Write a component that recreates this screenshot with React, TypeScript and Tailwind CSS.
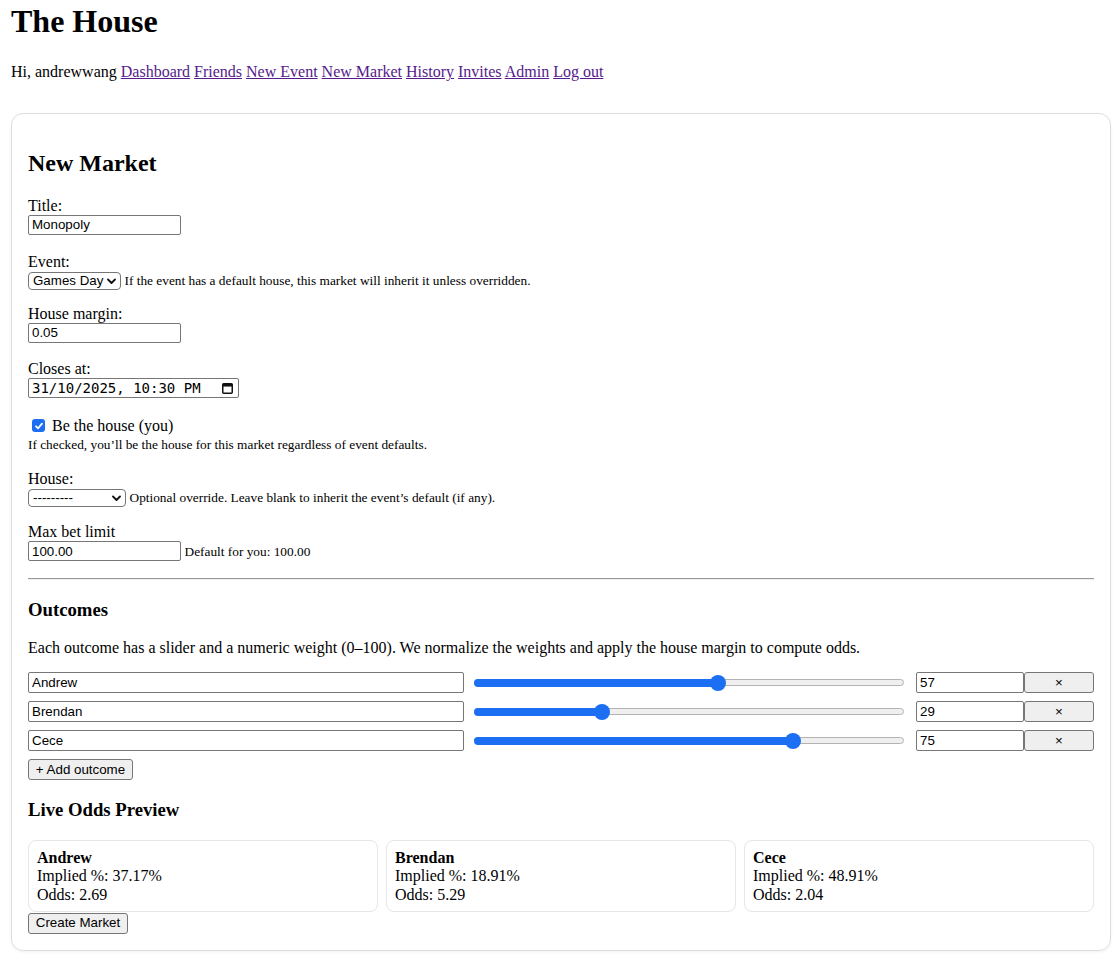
import React from "react";

const sans = "font-['Liberation_Sans',Arial,sans-serif] text-[13.33px] text-black";

function TextBox({ value, w, h = 20 }: { value: string; w: string; h?: number }) {
  return (
    <div
      className={`${sans} ${w} flex items-center border border-[#767676] rounded-[2px] bg-white pl-[3px] leading-none`}
      style={{ height: h }}
    >
      {value}
    </div>
  );
}

function FakeSelect({ value, w }: { value: string; w: string }) {
  return (
    <div
      className={`${sans} ${w} relative h-[18px] flex items-center border border-[#767676] rounded-[4px] bg-white pl-[4px] leading-none`}
    >
      <span>{value}</span>
      <svg
        className="absolute right-[4px] top-[5px]"
        width="9"
        height="7"
        viewBox="0 0 9 7"
        fill="none"
      >
        <path d="M1 1.5 L4.5 5 L8 1.5" stroke="#111" strokeWidth="1.8" strokeLinecap="round" strokeLinejoin="round" />
      </svg>
    </div>
  );
}

function Btn({ children, w, h = 21 }: { children: React.ReactNode; w: string; h?: number }) {
  return (
    <div
      className={`${sans} ${w} flex items-center justify-center border border-[#767676] rounded-[3px] bg-[#efefef] leading-none`}
      style={{ height: h }}
    >
      {children}
    </div>
  );
}

function Slider({ value }: { value: number }) {
  const c = 8 + (value / 100) * 414;
  return (
    <div className="relative w-[430px] h-[21px] ml-[10px] shrink-0">
      <div className="absolute left-0 right-0 top-[7px] h-[7px] rounded-full bg-[#efefef] border border-[#b3b3b3]" />
      <div className="absolute left-0 top-[6.5px] h-[8px] rounded-full bg-[#1c6ef2]" style={{ width: c }} />
      <div className="absolute top-[2.5px] w-[16px] h-[16px] rounded-full bg-[#1c6ef2]" style={{ left: c - 8 }} />
    </div>
  );
}

function OutcomeRow({ name, value }: { name: string; value: number }) {
  return (
    <div className="flex items-center h-[21px]">
      <TextBox value={name} w="w-[436px]" h={21} />
      <Slider value={value} />
      <div className="ml-[12px]">
        <TextBox value={String(value)} w="w-[108px]" h={21} />
      </div>
      <Btn w="w-[70px]">×</Btn>
    </div>
  );
}

function OddsCard({ name, implied, odds }: { name: string; implied: string; odds: string }) {
  return (
    <div className="border border-[#e6e6e6] rounded-[8px] px-[8px] pt-[7.5px] pb-[6.5px] leading-[18.4px]">
      <div className="font-bold">{name}</div>
      <div>Implied %: {implied}</div>
      <div>Odds: {odds}</div>
    </div>
  );
}

const links = ["Dashboard", "Friends", "New Event", "New Market", "History", "Invites", "Admin", "Log out"];

export default function App() {
  return (
    <div className="min-h-[955px] bg-white text-black font-['Liberation_Serif','Times_New_Roman',serif] text-[16px] pl-[10px]">
      <h1 className="pt-[3px] text-[32px] font-bold leading-[36.8px] pl-[1px]">The House</h1>
      <div className="mt-[23.4px] leading-[18.4px] pl-[1px]">
        Hi, andrewwang{" "}
        {links.map((l, i) => (
          <React.Fragment key={l}>
            <a href="#" className="text-[#551a8b] underline">
              {l}
            </a>
            {i < links.length - 1 ? " " : ""}
          </React.Fragment>
        ))}
      </div>

      <div className="mt-[31px] ml-[1px] w-[1100px] border border-[#dedede] rounded-[12px] shadow-[0_1px_3px_rgba(0,0,0,0.06)] p-[16px]">
        <h2 className="mt-[20px] text-[24px] font-bold leading-[27.6px]">New Market</h2>

        <div className="flex flex-col">
          {/* Title */}
          <div className="mt-[19.5px] leading-[18.4px]">Title:</div>
          <TextBox value="Monopoly" w="w-[153px]" />

          {/* Event */}
          <div className="mt-[18px] leading-[18.4px]">Event:</div>
          <div className="flex items-center h-[18px]">
            <FakeSelect value="Games Day" w="w-[93px]" />
            <span className="ml-[3.5px] text-[13.33px] leading-[15px]">
              If the event has a default house, this market will inherit it unless overridden.
            </span>
          </div>

          {/* House margin */}
          <div className="mt-[15px] leading-[18.4px]">House margin:</div>
          <TextBox value="0.05" w="w-[153px]" />

          {/* Closes at */}
          <div className="mt-[17px] leading-[18.4px]">Closes at:</div>
          <div className="relative w-[211px] h-[20px] border border-[#767676] rounded-[2px] bg-white flex items-center pl-[3px] font-['DejaVu_Sans_Mono',monospace] text-[14px] leading-none">
            <span className="whitespace-pre">31/10/2025, 10:30 PM</span>
            <svg className="absolute right-[5px] top-[4px]" width="11" height="11" viewBox="0 0 11 11" fill="none">
              <rect x="0.75" y="0.75" width="9.5" height="9.5" rx="1" stroke="#111" strokeWidth="1.5" />
              <rect x="0.75" y="0.75" width="9.5" height="2.8" fill="#111" />
            </svg>
          </div>

          {/* Be the house */}
          <div className="mt-[16px] h-[23px] flex items-center">
            <div className="ml-[4px] w-[13px] h-[13px] rounded-[3px] bg-[#1c6ef2] flex items-center justify-center">
              <svg width="10" height="10" viewBox="0 0 10 10" fill="none">
                <path d="M2 5.3 L4.1 7.3 L8 2.6" stroke="white" strokeWidth="1.8" strokeLinecap="round" strokeLinejoin="round" />
              </svg>
            </div>
            <span className="ml-[7px] leading-[18.4px]">Be the house (you)</span>
          </div>
          <div className="text-[13.33px] leading-[15.3px]">
            If checked, you’ll be the house for this market regardless of event defaults.
          </div>

          {/* House */}
          <div className="mt-[17px] leading-[18.4px]">House:</div>
          <div className="flex items-center h-[19px]">
            <FakeSelect value="---------" w="w-[98px]" />
            <span className="ml-[3.5px] text-[13.33px] leading-[15px]">
              Optional override. Leave blank to inherit the event’s default (if any).
            </span>
          </div>

          {/* Max bet */}
          <div className="mt-[16px] leading-[18.4px]">Max bet limit</div>
          <div className="flex items-center">
            <TextBox value="100.00" w="w-[153px]" />
            <span className="ml-[3.5px] text-[13.33px] leading-[15px]">Default for you: 100.00</span>
          </div>

          <div className="mt-[16.5px] border-t border-t-[#9a9a9a] border-b border-b-[#eeeeee]" />

          <h3 className="mt-[19.5px] text-[18.72px] font-bold leading-[21.5px]">Outcomes</h3>
          <p className="mt-[18.5px] leading-[18.4px]">
            Each outcome has a slider and a numeric weight (0–100). We normalize the weights and apply the house margin to compute odds.
          </p>

          <div className="mt-[14.5px] flex flex-col gap-[8px]">
            <OutcomeRow name="Andrew" value={57} />
            <OutcomeRow name="Brendan" value={29} />
            <OutcomeRow name="Cece" value={75} />
          </div>
          <div className="mt-[8px]">
            <Btn w="w-[105px]" h={21}>+ Add outcome</Btn>
          </div>

          <h3 className="mt-[18.5px] text-[18.72px] font-bold leading-[21.5px]">Live Odds Preview</h3>
          <div className="mt-[20px] grid grid-cols-3 gap-[8px]">
            <OddsCard name="Andrew" implied="37.17%" odds="2.69" />
            <OddsCard name="Brendan" implied="18.91%" odds="5.29" />
            <OddsCard name="Cece" implied="48.91%" odds="2.04" />
          </div>
          <div className="mt-[1px]">
            <Btn w="w-[100px]" h={21}>Create Market</Btn>
          </div>
        </div>
      </div>
    </div>
  );
}
